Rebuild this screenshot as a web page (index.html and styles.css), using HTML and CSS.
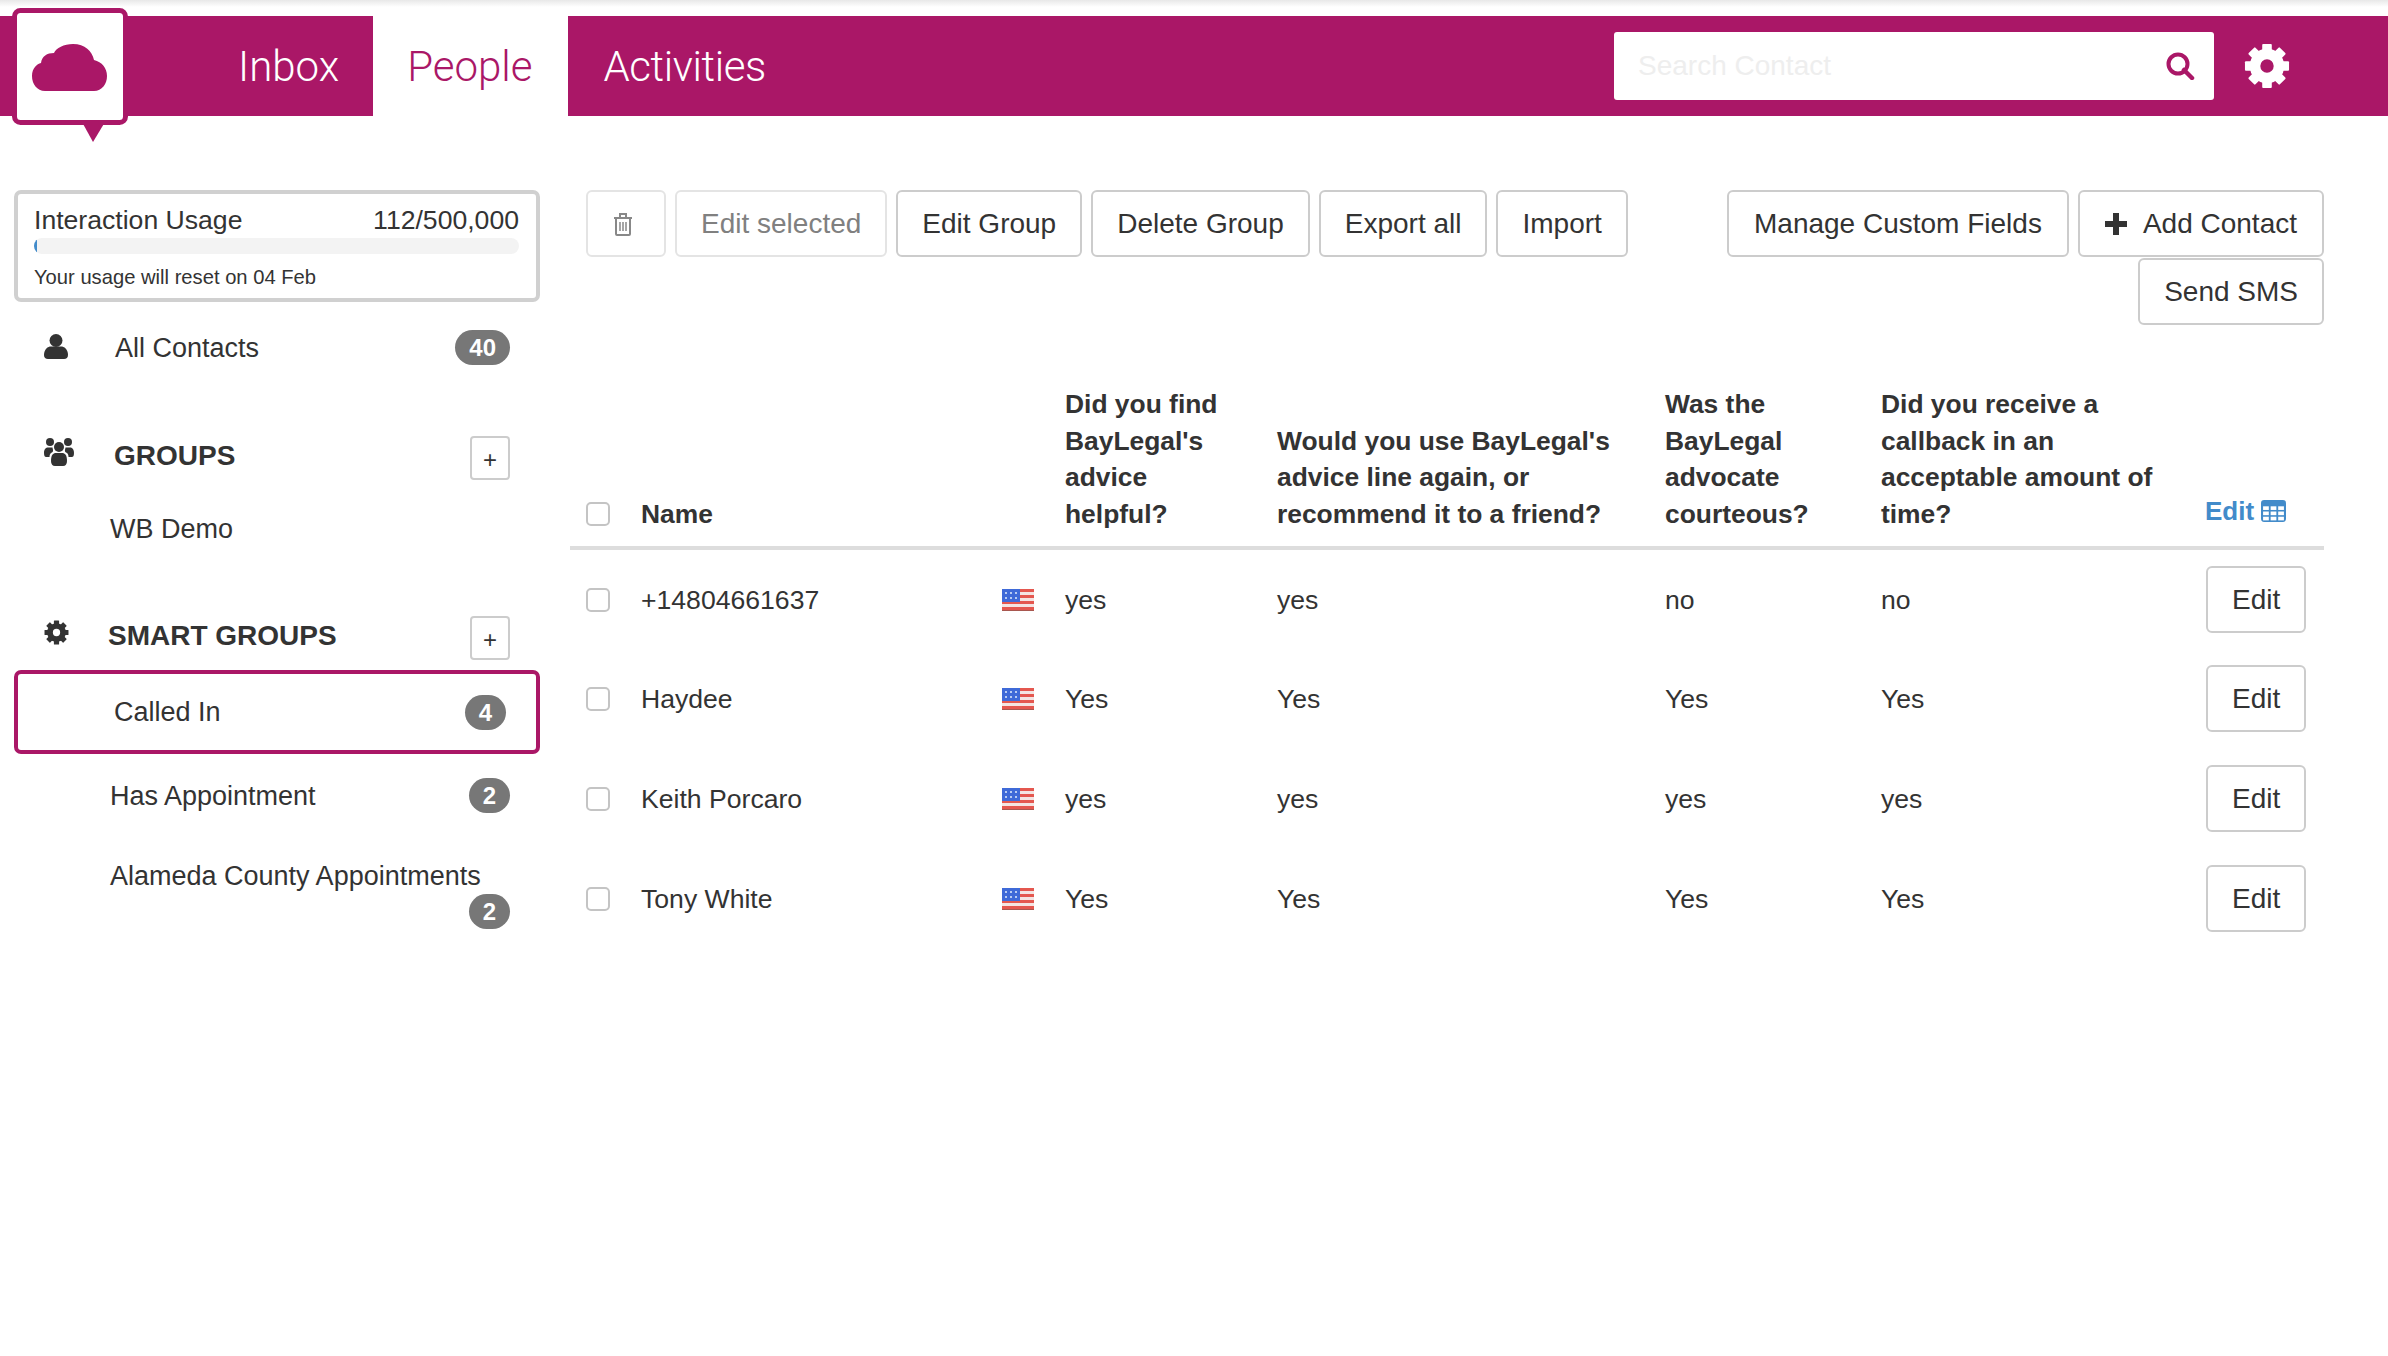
FILE: index.html
```html
<!DOCTYPE html>
<html lang="en">
<head>
    <meta charset="UTF-8">
    <meta name="viewport" content="width=device-width, initial-scale=1.0">
    <title>People</title>
    <link rel="stylesheet" href="styles.css">
</head>
<body>
    <!-- Icons used more than once -->
    <svg class="sprite" aria-hidden="true">
        <symbol id="cog" viewBox="0 0 48 48">
            <circle cx="24" cy="24" r="12.5" fill="none" stroke="currentColor" stroke-width="11"/>
            <g fill="currentColor">
                <rect x="19" y="1" width="10" height="10" rx="1"/>
                <rect x="19" y="1" width="10" height="10" rx="1" transform="rotate(45 24 24)"/>
                <rect x="19" y="1" width="10" height="10" rx="1" transform="rotate(90 24 24)"/>
                <rect x="19" y="1" width="10" height="10" rx="1" transform="rotate(135 24 24)"/>
                <rect x="19" y="1" width="10" height="10" rx="1" transform="rotate(180 24 24)"/>
                <rect x="19" y="1" width="10" height="10" rx="1" transform="rotate(225 24 24)"/>
                <rect x="19" y="1" width="10" height="10" rx="1" transform="rotate(270 24 24)"/>
                <rect x="19" y="1" width="10" height="10" rx="1" transform="rotate(315 24 24)"/>
            </g>
        </symbol>
        <symbol id="flag" viewBox="0 0 32 22">
            <rect width="32" height="22" fill="#f4e4e2"/>
            <g fill="#e4574f">
                <rect width="32" height="3"/>
                <rect y="6" width="32" height="3"/>
                <rect y="12" width="32" height="3"/>
                <rect y="18" width="32" height="4"/>
            </g>
            <rect width="18" height="13" fill="#3f6ad8"/>
            <g fill="#b9ccf2">
                <rect x="3" y="3" width="2" height="2"/>
                <rect x="8" y="3" width="2" height="2"/>
                <rect x="13" y="3" width="2" height="2"/>
                <rect x="3" y="8" width="2" height="2"/>
                <rect x="8" y="8" width="2" height="2"/>
                <rect x="13" y="8" width="2" height="2"/>
            </g>
            <rect y="21" width="32" height="1" fill="#a8574f"/>
        </symbol>
    </svg>

    <!-- Top bar -->
    <header class="topbar">
        <svg class="logo" viewBox="0 0 116 134">
            <path d="M70 114 L81 134 L93 114 Z" fill="#aa1767"/>
            <rect x="2.5" y="2.5" width="111" height="112" rx="6" fill="#fff" stroke="#aa1767" stroke-width="5"/>
            <path d="M33 83 C25 83 20 76 20 68 C20 60 25 56 29 55 C30 48 35 45 42 45 C44 40 52 36 61 36 C73 36 80 43 82 52 C90 54 95 60 95 68 C95 76 90 83 82 83 Z" fill="#aa1767"/>
        </svg>
        <nav class="tabs">
            <a class="tab tab-inbox">Inbox</a>
            <a class="tab tab-active">People</a>
            <a class="tab tab-activities">Activities</a>
        </nav>
        <div class="search">
            <input type="text" placeholder="Search Contact">
            <svg class="search-icon" viewBox="0 0 29 28">
                <circle cx="12" cy="12" r="9.500" fill="none" stroke="#aa1767" stroke-width="4"/>
                <path d="M18 18 L26 26" stroke="#aa1767" stroke-width="4.500" stroke-linecap="round"/>
            </svg>
        </div>
        <svg class="header-cog"><use href="#cog"/></svg>
    </header>

    <div class="layout">
        <!-- Sidebar -->
        <aside class="sidebar">
            <div class="usage">
                <div class="usage-head">
                    <span>Interaction Usage</span>
                    <span>112/500,000</span>
                </div>
                <div class="progress"><div class="progress-fill"></div></div>
                <div class="usage-note">Your usage will reset on 04 Feb</div>
            </div>

            <div class="side-row row-all">
                <svg class="side-icon icon-user" viewBox="0 0 24 25">
                    <circle cx="12" cy="6.5" r="6.5" fill="#333"/>
                    <path d="M0 21 C0 15 4 12.5 7 12.5 L17 12.5 C20 12.5 24 15 24 21 C24 23.5 22.5 25 20 25 L4 25 C1.5 25 0 23.5 0 21 Z" fill="#333"/>
                </svg>
                <span class="label label-all">All Contacts</span>
                <span class="badge">40</span>
            </div>

            <div class="side-head head-groups">
                <svg class="side-icon icon-group" viewBox="0 0 30 28">
                    <g fill="#333">
                        <circle cx="6" cy="4" r="4"/>
                        <circle cx="24" cy="4" r="4"/>
                        <circle cx="15" cy="9" r="5"/>
                        <path d="M0 15 C0 11 2 9.5 4 9.5 L8.5 9.5 C9 12 10 14 7 15 C6 16 5.5 17 5.5 19 L2 19 C1 19 0 18 0 15 Z"/>
                        <path d="M30 15 C30 11 28 9.5 26 9.5 L21.5 9.5 C21 12 20 14 23 15 C24 16 24.500 17 24.500 19 L28 19 C29 19 30 18 30 15 Z"/>
                        <path d="M7 23 C7 17 9 15 12 15 L18 15 C21 15 23 17 23 23 C23 26 21.500 28 19 28 L11 28 C8.500 28 7 26 7 23 Z"/>
                    </g>
                </svg>
                <span class="side-title title-groups">GROUPS</span>
                <button class="add-btn">+</button>
            </div>
            <div class="side-link link-demo">WB Demo</div>

            <div class="side-head head-smart">
                <svg class="side-icon icon-cog"><use href="#cog"/></svg>
                <span class="side-title title-smart">SMART GROUPS</span>
                <button class="add-btn">+</button>
            </div>
            <div class="side-row row-called">
                <span class="label">Called In</span>
                <span class="badge">4</span>
            </div>
            <div class="side-row row-appointment">
                <span class="label">Has Appointment</span>
                <span class="badge">2</span>
            </div>
            <div class="side-row row-alameda">
                <span class="label">Alameda County Appointments</span>
                <span class="badge">2</span>
            </div>
        </aside>

        <!-- Contacts -->
        <main class="content">
            <div class="toolbar">
                <div class="btn-group">
                    <button class="btn btn-trash" disabled>
                        <svg class="trash" viewBox="0 0 20 24" fill="none" stroke="#888" stroke-width="2">
                            <path d="M1 6 L19 6"/>
                            <path d="M7 5 L7 2 L13 2 L13 5"/>
                            <path d="M3 6 L3 22 C3 22.500 3.500 23 4 23 L16 23 C16.500 23 17 22.500 17 22 L17 6"/>
                            <path d="M7 10 L7 19 M10 10 L10 19 M13 10 L13 19" stroke-width="1.500"/>
                        </svg>
                    </button>
                    <button class="btn" disabled>Edit selected</button>
                    <button class="btn">Edit Group</button>
                    <button class="btn">Delete Group</button>
                    <button class="btn">Export all</button>
                    <button class="btn">Import</button>
                </div>
                <div class="btn-group btn-group-right">
                    <button class="btn">Manage Custom Fields</button>
                    <button class="btn">
                        <svg class="plus" viewBox="0 0 22 22"><path d="M8 0 H14 V8 H22 V14 H14 V22 H8 V14 H0 V8 H8 Z" fill="#333"/></svg>Add Contact
                    </button>
                    <button class="btn btn-sms">Send SMS</button>
                </div>
            </div>

            <table class="contacts">
                <colgroup>
                    <col class="col-check">
                    <col class="col-name">
                    <col class="col-flag">
                    <col class="col-q1">
                    <col class="col-q2">
                    <col class="col-q3">
                    <col class="col-q4">
                    <col class="col-edit">
                </colgroup>
                <thead>
                    <tr>
                        <th><input type="checkbox" class="check"></th>
                        <th>Name</th>
                        <th></th>
                        <th class="head-q1">Did you find BayLegal's advice helpful?</th>
                        <th>Would you use BayLegal's advice line again, or recommend it to a friend?</th>
                        <th>Was the BayLegal advocate courteous?</th>
                        <th class="head-q4">Did you receive a callback in an acceptable amount of time?</th>
                        <th>
                            <a class="edit-columns">Edit
                                <svg class="table-icon" viewBox="0 0 24 21">
                                    <rect width="24" height="21" rx="3" fill="#428bca"/>
                                    <g fill="#fff">
                                        <rect x="2" y="6" width="5.500" height="3.500"/>
                                        <rect x="9.250" y="6" width="5.500" height="3.500"/>
                                        <rect x="16.500" y="6" width="5.500" height="3.500"/>
                                        <rect x="2" y="11" width="5.500" height="3.500"/>
                                        <rect x="9.250" y="11" width="5.500" height="3.500"/>
                                        <rect x="16.500" y="11" width="5.500" height="3.500"/>
                                        <rect x="2" y="16" width="5.500" height="3.500"/>
                                        <rect x="9.250" y="16" width="5.500" height="3.500"/>
                                        <rect x="16.500" y="16" width="5.500" height="3.500"/>
                                    </g>
                                </svg>
                            </a>
                        </th>
                    </tr>
                </thead>
                <tbody>
                    <tr>
                        <td><input type="checkbox" class="check"></td>
                        <td>+14804661637</td>
                        <td><svg class="flag"><use href="#flag"/></svg></td>
                        <td>yes</td>
                        <td>yes</td>
                        <td>no</td>
                        <td>no</td>
                        <td><button class="btn">Edit</button></td>
                    </tr>
                    <tr>
                        <td><input type="checkbox" class="check"></td>
                        <td>Haydee</td>
                        <td><svg class="flag"><use href="#flag"/></svg></td>
                        <td>Yes</td>
                        <td>Yes</td>
                        <td>Yes</td>
                        <td>Yes</td>
                        <td><button class="btn">Edit</button></td>
                    </tr>
                    <tr>
                        <td><input type="checkbox" class="check"></td>
                        <td>Keith Porcaro</td>
                        <td><svg class="flag"><use href="#flag"/></svg></td>
                        <td>yes</td>
                        <td>yes</td>
                        <td>yes</td>
                        <td>yes</td>
                        <td><button class="btn">Edit</button></td>
                    </tr>
                    <tr>
                        <td><input type="checkbox" class="check"></td>
                        <td>Tony White</td>
                        <td><svg class="flag"><use href="#flag"/></svg></td>
                        <td>Yes</td>
                        <td>Yes</td>
                        <td>Yes</td>
                        <td>Yes</td>
                        <td><button class="btn">Edit</button></td>
                    </tr>
                </tbody>
            </table>
        </main>
    </div>
</body>
</html>
```

FILE: styles.css
```css
* {
    box-sizing: border-box;
}
body {
    margin: 0;
    padding-top: 16px;
    min-height: 1356px;
    font-family: "Liberation Sans", Arial, sans-serif;
    font-size: 27px;
    line-height: 36px;
    color: #333;
    background: linear-gradient(#e8e8e8, #fff 7px) no-repeat #fff;
}
.sprite {
    display: none;
}

/* Top bar */
.topbar {
    position: relative;
    display: flex;
    align-items: center;
    height: 100px;
    padding-left: 204px;
    background-color: #aa1767;
}
.logo {
    position: absolute;
    left: 12px;
    top: -8px;
    width: 116px;
    height: 134px;
}
.tabs {
    display: flex;
    align-self: stretch;
}
.tab {
    display: flex;
    align-items: center;
    padding: 2px 34px 0;
    font-family: Roboto, "Liberation Sans", sans-serif;
    font-weight: 300;
    font-size: 42px;
    color: #fff;
}
.tab-active {
    padding-right: 36px;
    background-color: #fff;
    color: #aa1767;
}
.tab-activities {
    padding-left: 35px;
    letter-spacing: -0.4px;
}
.search {
    display: flex;
    align-items: center;
    width: 600px;
    height: 68px;
    margin-left: auto;
    padding: 0 19px 0 24px;
    background-color: #fff;
    border-radius: 3px;
}
.search input {
    flex: 1;
    min-width: 0;
    border: 0;
    padding: 0;
    outline: none;
    font: inherit;
    font-size: 28px;
}
.search input::placeholder {
    color: #eee;
    opacity: 1;
}
.search-icon {
    width: 29px;
    height: 28px;
}
.header-cog {
    width: 46px;
    height: 46px;
    margin: 0 98px 0 30px;
    color: #fff;
}

/* Page columns */
.layout {
    display: flex;
    margin-top: 74px;
}
.sidebar {
    width: 570px;
    padding-left: 14px;
    flex-shrink: 0;
}
.content {
    width: 1754px;
}

/* Sidebar */
.usage {
    width: 526px;
    height: 112px;
    padding: 9px 17px 0 16px;
    border: 4px solid #d0d0d0;
    border-radius: 7px;
    font-size: 26.6px;
    line-height: 34px;
}
.usage-head {
    display: flex;
    justify-content: space-between;
}
.progress {
    height: 16px;
    margin-top: 1px;
    background-color: #f3f3f3;
    border-radius: 8px;
    overflow: hidden;
}
.progress-fill {
    width: 3px;
    height: 100%;
    background-color: #428bca;
}
.usage-note {
    margin-top: 8px;
    font-size: 20.2px;
    line-height: 30px;
}
.side-row,
.side-head {
    display: flex;
    align-items: center;
    width: 526px;
    padding-right: 30px;
}
.side-row .badge {
    margin-left: auto;
}
.side-head {
    align-items: flex-start;
    padding-left: 30px;
}
.badge {
    height: 35px;
    padding: 0 14px;
    border-radius: 18px;
    background-color: #777;
    color: #fff;
    font-size: 24px;
    font-weight: bold;
    line-height: 35px;
}
.side-icon {
    flex-shrink: 0;
}
.icon-user {
    width: 24px;
    height: 25px;
    margin-top: -2px;
}
.icon-group {
    width: 30px;
    height: 28px;
    margin-top: 2px;
}
.icon-cog {
    width: 25px;
    height: 25px;
    margin-top: 4px;
    color: #333;
}
.row-all {
    height: 35px;
    margin-top: 28px;
    padding-left: 30px;
}
.label-all {
    margin-left: 47px;
}
.head-groups {
    margin-top: 71px;
}
.title-groups {
    margin: 2px 0 0 40px;
}
.side-title {
    font-size: 28px;
    font-weight: bold;
}
.add-btn {
    width: 40px;
    height: 44px;
    margin-left: auto;
    padding: 4px 0 0;
    border: 2px solid #ccc;
    border-radius: 4px;
    background-color: #fff;
    color: #333;
    font-family: inherit;
    font-size: 24px;
    line-height: 1;
}
.side-link {
    margin-top: 31px;
    padding-left: 96px;
}
.head-smart {
    margin-top: 69px;
}
.title-smart {
    margin: 2px 0 0 39px;
}
.row-called {
    height: 84px;
    margin-top: 10px;
    padding: 0 30px 0 96px;
    border: 4px solid #aa1767;
    border-radius: 7px;
}
.row-appointment {
    height: 35px;
    margin-top: 24px;
    padding-left: 96px;
}
.row-alameda {
    flex-wrap: wrap;
    margin-top: 45px;
    padding-left: 96px;
}

/* Buttons */
.btn {
    height: 67px;
    padding: 0 24px;
    border: 2px solid #ccc;
    border-radius: 6px;
    background-color: #fff;
    color: #333;
    font-family: inherit;
    font-size: 28px;
    white-space: nowrap;
}
.btn:disabled {
    border-color: #e4e4e4;
    color: #808080;
}
.btn-trash {
    width: 80px;
    padding: 0 0 0 25px;
}
.trash {
    display: block;
    width: 20px;
    height: 24px;
}
.plus {
    width: 22px;
    height: 22px;
    margin-right: 16px;
    vertical-align: -2px;
}

/* Toolbar */
.toolbar {
    display: flex;
    align-items: flex-start;
    justify-content: space-between;
    padding-left: 16px;
}
.btn-group {
    display: flex;
    gap: 9px;
}
.btn-group-right {
    flex-wrap: wrap;
    justify-content: flex-end;
    width: 610px;
    row-gap: 1px;
}
.btn-group-right .btn {
    padding: 0 25px;
}
.btn-group-right .btn-sms {
    padding: 0 24px;
}

/* Table */
.contacts {
    width: 1754px;
    margin-top: 61px;
    border-collapse: collapse;
    table-layout: fixed;
}
.col-check { width: 71px; }
.col-name { width: 361px; }
.col-flag { width: 63px; }
.col-q1 { width: 212px; }
.col-q2 { width: 388px; }
.col-q3 { width: 216px; }
.col-q4 { width: 324px; }
.col-edit { width: 119px; }
.contacts th {
    padding: 0 0 14px;
    border-bottom: 4px solid #ddd;
    font-size: 26.4px;
    text-align: left;
    vertical-align: bottom;
    line-height: 36.5px;
}
.contacts .head-q1 {
    padding-right: 40px;
}
.contacts .head-q4 {
    padding-right: 30px;
}
.contacts td {
    height: 100px;
    padding: 2px 0 0;
    font-size: 26.6px;
    vertical-align: middle;
}
.contacts td .btn {
    display: block;
    margin: -1px 0 0 1px;
}
.check {
    appearance: none;
    display: block;
    width: 24px;
    height: 24px;
    margin: 0 0 0 16px;
    border: 2px solid #c4c4c4;
    border-radius: 5px;
    background-color: #fff;
}
th .check {
    margin-bottom: 6px;
}
.flag {
    display: block;
    width: 32px;
    height: 22px;
}
.edit-columns {
    display: inline-block;
    margin-bottom: 3px;
    color: #428bca;
    font-size: 26px;
}
.table-icon {
    width: 25px;
    height: 22px;
    vertical-align: -2px;
}
```
